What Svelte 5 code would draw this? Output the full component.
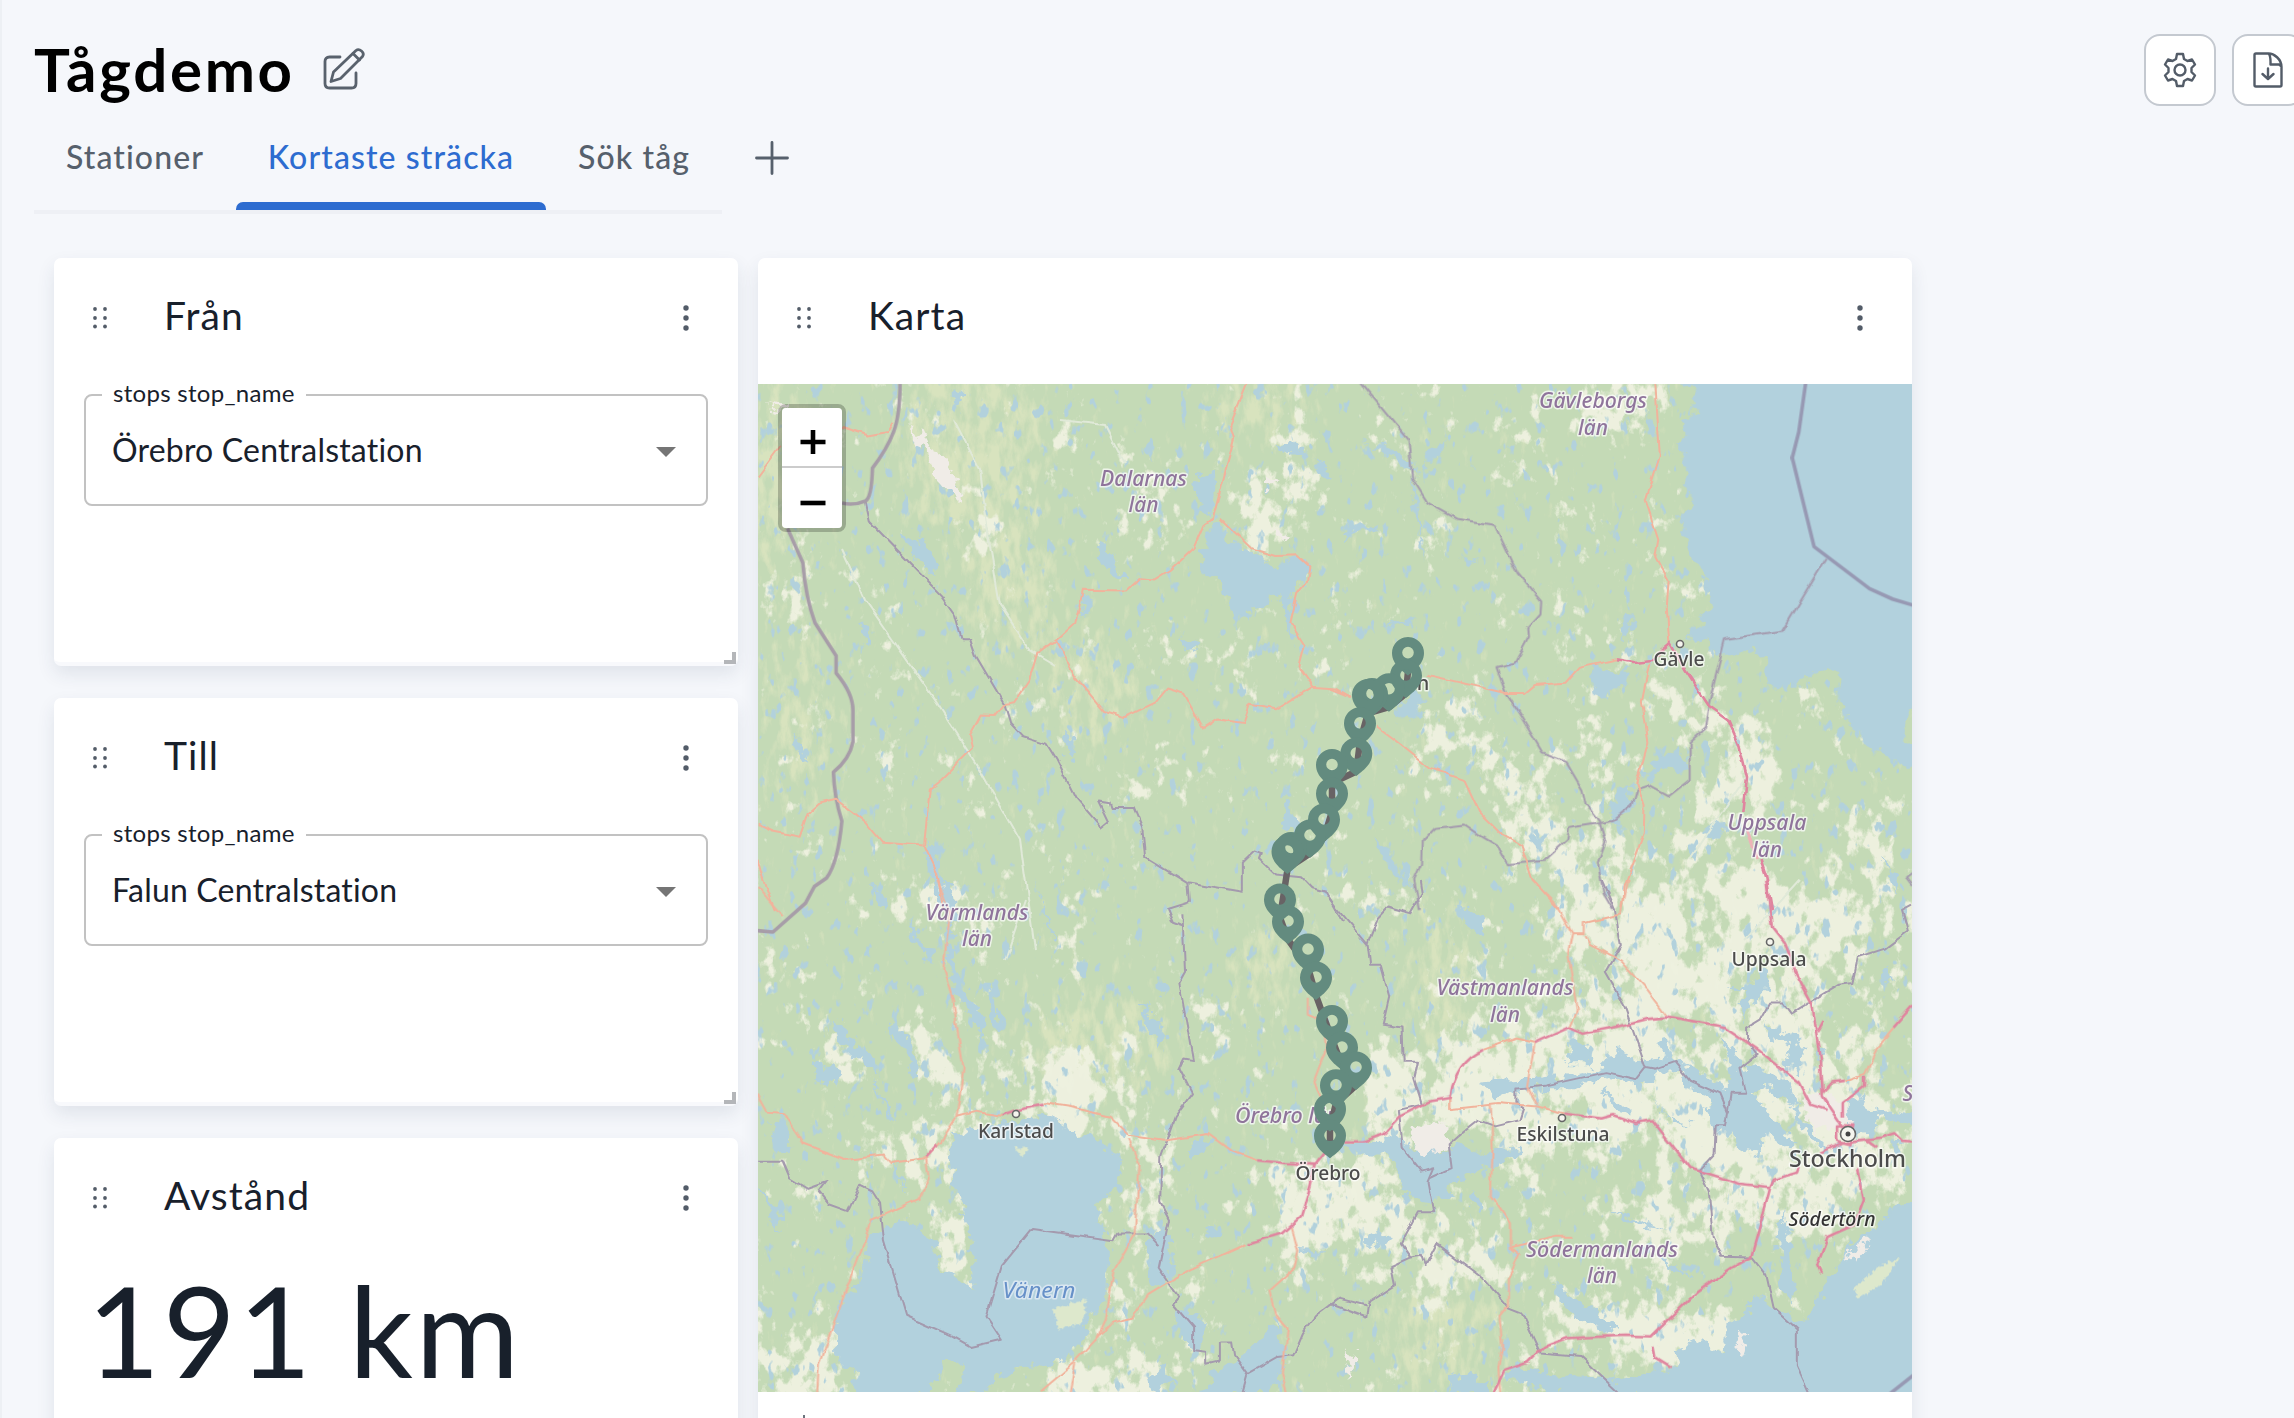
<script>
  const tabs = [
    { id: 'stationer', label: 'Stationer' },
    { id: 'kortaste', label: 'Kortaste sträcka', active: true },
    { id: 'sok', label: 'Sök tåg' }
  ];

  const selectors = [
    { id: 'fran', title: 'Från', value: 'Örebro Centralstation' },
    { id: 'till', title: 'Till', value: 'Falun Centralstation' }
  ];

  // Stations along the route, north to south.
  const stops = [
    [1408, 652.6], [1406, 675], [1389, 688.7], [1372, 693.5], [1368, 694.5], [1360, 722.8],
    [1356.3, 753], [1332, 764.5], [1332, 793], [1324, 819], [1310, 835], [1291, 847.5],
    [1287.5, 851], [1280, 899], [1288, 921], [1308, 949], [1316, 977], [1332, 1020.6],
    [1342, 1047], [1356, 1067], [1336, 1084.8], [1330, 1108.6], [1330, 1135.3]
  ];
  const route = stops.map(([x, y]) => `${x},${y + 18.5}`).join(' ');

  const regions = [
    { lines: ['Dalarnas', 'län'], x: 1143.5, y: 485.5, w: 87 },
    { lines: ['Gävleborgs', 'län'], x: 1593, y: 408, w: 108 },
    { lines: ['Uppsala', 'län'], x: 1767, y: 830, w: 79 },
    { lines: ['Värmlands', 'län'], x: 977, y: 919.5, w: 103 },
    { lines: ['Västmanlands', 'län'], x: 1505, y: 995, w: 137 },
    { lines: ['Södermanlands', 'län'], x: 1602, y: 1256.5, w: 152 },
    { lines: ['Örebro län'], x: 1287, y: 1123, w: 104 }
  ];
  const towns = [
    { name: 'Gävle', x: 1679, y: 666, w: 51, dot: [1680, 644] },
    { name: 'Karlstad', x: 1016, y: 1138, w: 76, dot: [1016, 1114] },
    { name: 'Örebro', x: 1328, y: 1180, w: 65 },
    { name: 'Uppsala', x: 1769, y: 966, w: 75, dot: [1770, 942] },
    { name: 'Eskilstuna', x: 1563, y: 1141, w: 93, dot: [1562, 1118] }
  ];

  const sheets = {
    nw: 'translate(750 370) scale(0.38265 0.34439)',
    ne: 'translate(1330 370) scale(0.38265 0.34439)',
    sw: 'translate(750 880) scale(0.38265 0.34311)',
    se: 'translate(1330 880) scale(0.38265 0.34311)',
    malaren: 'translate(1600 850) scale(0.33333)'
  };
</script>

{#snippet cardHeader(title)}
  <header class="card-head">
    <svg class="drag" width="16" height="24" viewBox="0 0 16 24" aria-hidden="true">
      {#each [3, 12, 20.5] as y}
        <circle cx="3" cy={y} r="1.9" /><circle cx="13" cy={y} r="1.9" />
      {/each}
    </svg>
    <h2>{title}</h2>
    <svg class="kebab" width="8" height="28" viewBox="0 0 8 28" aria-hidden="true">
      {#each [4, 14, 24] as y}<circle cx="4" cy={y} r="2.7" />{/each}
    </svg>
  </header>
{/snippet}

<main class="page">
  <div class="topbar">
    <h1>Tågdemo</h1>
    <svg class="edit" width="44" height="44" viewBox="0 0 44 44" aria-hidden="true">
      <path d="M18 10H7.500Q3 10 3 14.500V36.500Q3 41 7.500 41H29.500Q34 41 34 36.500V26" />
      <path d="M9 34.500 11.500 25 34 3.500Q36.500 1.500 39.500 4T40.500 9.500L18.500 31.500Z" />
      <path d="m31 6.500 6.500 6.500" />
    </svg>
    <div class="actions">
      <button aria-label="Inställningar">
        <svg width="34" height="36" viewBox="0 0 34 36">
          <path d="M14 2h6l1 5 3.500 2 4.500-1.500 3 5-3.500 3.500v4l3.500 3.500-3 5L24.500 27 21 29l-1 5h-6l-1-5-3.500-2L5 28.500l-3-5L5.500 20v-4L2 12.500l3-5L9.500 9 13 7Z" />
          <circle cx="17" cy="18" r="5.500" />
        </svg>
      </button>
      <button aria-label="Exportera">
        <svg width="30" height="36" viewBox="0 0 30 36">
          <path d="M3 1.500H15.500C21 1.500 28.500 7 28.500 15V33Q28.500 34.500 27 34.500H3Q1.500 34.500 1.500 33V3Q1.500 1.500 3 1.500ZM15.500 1.500C18 4 17.500 8 17.500 12.500H26L28 14M15 16.500V26.500M9.500 22 15 27 20.500 22" />
        </svg>
      </button>
    </div>
  </div>

  <div class="tab-row">
    <nav class="tabs">
      {#each tabs as tab (tab.id)}
        <a class="tab {tab.id}" class:active={tab.active} href="#{tab.id}">{tab.label}</a>
      {/each}
    </nav>
    <svg class="plus" width="34" height="34" viewBox="0 0 34 34" aria-hidden="true"><path d="M17 1.500V32.500M1.500 17H32.500" /></svg>
  </div>

  <div class="board">
    <div class="column">
      {#each selectors as s (s.id)}
        <section class="card small">
          {@render cardHeader(s.title)}
          <fieldset>
            <legend>stops stop_name</legend>
            <div class="value">
              <span>{s.value}</span>
              <svg width="20" height="10" viewBox="0 0 20 10" aria-hidden="true"><path d="M0 0H20L10 10Z" /></svg>
            </div>
          </fieldset>
          <i class="grip"></i>
        </section>
      {/each}
      <section class="card small">
        {@render cardHeader('Avstånd')}
        <p class="distance">191 km</p>
      </section>
    </div>

    <section class="card wide">
      {@render cardHeader('Karta')}
      <div class="map">
        <svg class="tiles" width="1154" height="1008" viewBox="758 384 1154 1008">
          <defs>
            <filter id="fields" filterUnits="userSpaceOnUse" x="758" y="384" width="1154" height="1008" color-interpolation-filters="sRGB">
              <feGaussianBlur in="SourceGraphic" stdDeviation="22" result="density" />
              <feTurbulence type="fractalNoise" baseFrequency="0.085 0.06" numOctaves="4" seed="8" />
              <feColorMatrix values="0 0 0 0 0  0 0 0 0 0  0 0 0 0 0  1 0 0 0 0" result="fine" />
              <feTurbulence type="fractalNoise" baseFrequency="0.022 0.016" numOctaves="3" seed="31" />
              <feColorMatrix values="0 0 0 0 0  0 0 0 0 0  0 0 0 0 0  1 0 0 0 0" result="coarse" />
              <feComposite in="fine" in2="coarse" operator="arithmetic" k2="0.55" k3="0.6" k4="-0.1" result="noise" />
              <feComposite in="density" in2="noise" operator="arithmetic" k2="0.3" k3="1" k4="-0.14" />
              <feComponentTransfer result="cut"><feFuncA type="linear" slope="10" intercept="-4.7" /></feComponentTransfer>
              <feFlood flood-color="#eff1e0" flood-opacity="0.95" />
              <feComposite in2="cut" operator="in" />
            </filter>
            <filter id="heath" filterUnits="userSpaceOnUse" x="758" y="384" width="1154" height="1008" color-interpolation-filters="sRGB">
              <feGaussianBlur in="SourceGraphic" stdDeviation="22" result="density" />
              <feTurbulence type="fractalNoise" baseFrequency="0.1 0.04" numOctaves="4" seed="21" />
              <feColorMatrix values="0 0 0 0 0  0 0 0 0 0  0 0 0 0 0  1 0 0 0 0" result="noise" />
              <feComposite in="density" in2="noise" operator="arithmetic" k2="0.3" k3="0.8" k4="-0.1" />
              <feComponentTransfer result="cut"><feFuncA type="linear" slope="4" intercept="-1.75" /></feComponentTransfer>
              <feFlood flood-color="#dde5c0" flood-opacity="0.8" />
              <feComposite in2="cut" operator="in" />
            </filter>
            <filter id="ponds" filterUnits="userSpaceOnUse" x="758" y="384" width="1154" height="1008" color-interpolation-filters="sRGB">
              <feTurbulence type="fractalNoise" baseFrequency="0.09 0.05" numOctaves="3" seed="5" />
              <feColorMatrix values="0 0 0 0 0.698  0 0 0 0 0.82  0 0 0 0 0.863  13 0 0 0 -8.6" />
            </filter>
            <filter id="shore" x="-5%" y="-5%" width="110%" height="110%" color-interpolation-filters="sRGB">
              <feTurbulence type="fractalNoise" baseFrequency="0.09" numOctaves="3" seed="3" />
              <feDisplacementMap in="SourceGraphic" scale="19" xChannelSelector="R" yChannelSelector="G" />
            </filter>
            <filter id="wiggle" filterUnits="userSpaceOnUse" x="740" y="370" width="1190" height="1040" color-interpolation-filters="sRGB">
              <feTurbulence type="fractalNoise" baseFrequency="0.06" numOctaves="2" seed="11" />
              <feDisplacementMap in="SourceGraphic" scale="6" xChannelSelector="R" yChannelSelector="G" />
            </filter>
          </defs>

          <rect class="forest" x="758" y="384" width="1154" height="1008" />
          <g filter="url(#heath)" fill="#000">
            <ellipse cx="970" cy="450" rx="80" ry="90" /><ellipse cx="770" cy="480" rx="40" ry="110" />
            <ellipse cx="1010" cy="590" rx="50" ry="70" /><ellipse cx="1090" cy="690" rx="45" ry="60" />
            <ellipse cx="800" cy="720" rx="30" ry="100" /><ellipse cx="1260" cy="400" rx="50" ry="45" />
            <ellipse cx="1270" cy="970" rx="35" ry="60" /><ellipse cx="1440" cy="980" rx="35" ry="80" />
            <ellipse cx="1440" cy="1340" rx="60" ry="60" /><ellipse cx="1100" cy="1040" rx="80" ry="50" />
          </g>
          <g filter="url(#fields)" fill="#000">
            <ellipse cx="1750" cy="950" rx="150" ry="80" opacity=".8" /><ellipse cx="1620" cy="960" rx="90" ry="100" opacity=".75" />
            <ellipse cx="1470" cy="1080" rx="100" ry="60" opacity=".95" /><ellipse cx="1620" cy="1100" rx="160" ry="60" />
            <ellipse cx="1340" cy="1210" rx="80" ry="50" /><ellipse cx="1470" cy="1250" rx="80" ry="40" opacity=".6" />
            <ellipse cx="1640" cy="1330" rx="130" ry="35" opacity=".8" /><ellipse cx="1800" cy="1130" rx="110" ry="100" opacity=".9" />
            <ellipse cx="1450" cy="770" rx="75" ry="30" opacity=".75" /><ellipse cx="1560" cy="800" rx="60" ry="80" opacity=".5" />
            <ellipse cx="1730" cy="800" rx="50" ry="80" opacity=".65" /><ellipse cx="1860" cy="830" rx="40" ry="60" opacity=".5" />
            <ellipse cx="1580" cy="405" rx="100" ry="25" opacity=".8" /><ellipse cx="1590" cy="560" rx="20" ry="40" opacity=".5" />
            <ellipse cx="1650" cy="670" rx="70" ry="20" opacity=".6" /><ellipse cx="1280" cy="490" rx="50" ry="50" opacity=".6" />
            <ellipse cx="1060" cy="1090" rx="100" ry="50" opacity=".75" /><ellipse cx="940" cy="1110" rx="40" ry="80" opacity=".6" />
            <ellipse cx="955" cy="1240" rx="25" ry="60" opacity=".95" /><ellipse cx="800" cy="1370" rx="50" ry="40" />
            <ellipse cx="1110" cy="1370" rx="60" ry="50" /><ellipse cx="1130" cy="1190" rx="20" ry="100" opacity=".7" />
            <ellipse cx="950" cy="920" rx="14" ry="60" opacity=".6" /><ellipse cx="850" cy="1070" rx="20" ry="50" opacity=".4" />
            <ellipse cx="1680" cy="1240" rx="80" ry="60" opacity=".4" />
          </g>
          <rect x="758" y="384" width="1154" height="1008" filter="url(#ponds)" />

          <g class="water" filter="url(#shore)">
            <g transform={sheets.nw}>
              <path d="M1170 315l20-20 30 8 5 50-15 70-30-15-15-60ZM1205 440l30 10 5 40 70 30 40 45 40 10 20-25 40-10 20 35-15 45-35 10-15 50 15 100-20-30-15-90-50 30-30-5 0 45-20-35-5 50-20-30-5-60-35-40-50-60 20-45ZM900 500l40 20 25 55 25 35-30-10-40-45ZM395 470l60 30 30 60 5 40-40-35-30-40ZM870 650l20 5 0 50-30 20ZM280 740h35l-5 60-15-15ZM1370 225l50-20 30 40-40 0ZM1475 260l30 10 10 50-30-20ZM110 1060l30 30 10 40-20-10ZM1390 1250l20-5 5 50 30 25-50 10ZM465 1370l15 30 45 180-15-10-40-110ZM535 60h20l-8 40h-12ZM820 1040l18 20 10 70-18-10ZM1120 780l60 10-30 30Z" />
            </g>
            <g transform={sheets.ne}>
              <path d="M915 30 960 60 945 90 965 120 920 145 930 200 905 210 930 250 920 330 950 380 915 430 930 490 945 540 970 570 985 640 1000 690 960 750 925 775 990 790 1000 820 1060 830 1100 815 1140 840 1145 905 1170 930 1200 920 1240 900 1290 870 1325 880 1325 960 1360 1040 1400 1090 1450 1120 1550 1170V1110L1500 1070 1510 980 1550 950V30Z" />
              <path d="M690 860l50 20 40-15 5 50-40 10-35 30-30-60ZM775 710l20 0-10 60-30 20ZM970 1340l50-30 20 20-40 35ZM850 1140l50-40 40 30-10 40-60-10-40 40-15-25ZM730 1310l20-100 40-10 0 60-40 60ZM85 210l90 20 60 70-40-10-40-40ZM240 260l60-60 10-40-15 80-50 40ZM35 480l40-30 60 10-80 15-20 20ZM130 740l90-15-20 20ZM215 290l15 100 5 100 25 70-30-60-15-110ZM170 960l60-20 20 30-40 50-30-10ZM110 1350l40 30 20 60 50 70-60-50-30-60ZM340 545l50 10-30 15ZM525 1350l50 0-20 25-30-5Z" />
            </g>
            <g transform={sheets.sw}>
              <path d="M520 730 560 750 590 720 700 700 790 690 860 750 900 740 930 790 970 810 960 900 920 930 905 1000 935 1040 935 1120 930 1240 880 1270 890 1320 830 1390 770 1415 700 1420 640 1460 610 1500H540L560 1400 500 1410 470 1500H270L280 1440 225 1410 225 1320 245 1220 285 1180 310 1060 350 1010 390 985 440 1020 480 1050 500 1130 560 1175 590 1190 575 1050 550 920 525 880Z" />
              <path d="M1040 1060 1080 1010 1095 1060 1110 1120 1080 1170 1040 1170ZM1190 1500 1210 1440 1300 1370 1380 1280 1395 1400 1360 1500ZM1110 1260l70 10 0 80-20 20-40-50ZM1150 780l30-30 30 5-10 20-30 20-20 40ZM215 400l45 40 20 50 45 10 5 60-40-20-50-60ZM165 545l50-15 15 40-30 35ZM360 420l60 30 20 110-15 20-20-80-40-40ZM420 110l20 60 50 70-30-10-40-60ZM505 0h15l15 70-5 170 30 80 45 80 10 110-15-70-50-90-30-60ZM620 310l25 10 10 100-15 20ZM740 0l70 200-25-50ZM20 890l50 60 10 80-20-20-10-60ZM50 700l60 20-15 70-30-10ZM320 570l20 60 45 70-20-5-30-60ZM370 820l40 90-40-60ZM1065 290l30 10 0 40-30-10ZM1190 1010l50 0-20 35-25-10ZM1440 1075l60 5-40 15ZM1040 1450l40-40 30 60-60 20ZM1020 350l60 80-5 60-40-70ZM310 10l40 40 5 40-30-30Z" />
            </g>
            <g transform={sheets.se}>
              <path d="M1550 930 1490 950 1440 990 1400 1030 1350 1080 1310 1140 1290 1190 1270 1240 1240 1290 1200 1260 1165 1250 1110 1200 1090 1250 1050 1290 1030 1330 1040 1390 960 1340 900 1370 910 1420 850 1430 780 1450 720 1470 700 1510H1550Z" />
              <path d="M30 770 160 750 200 770 300 790 330 770 400 800 500 780 500 800 430 830 330 870 310 900 330 910 270 940 200 930 185 880 160 800 60 800ZM400 590 490 580 620 570 700 550 780 520 850 560 850 585 780 590 700 580 640 610 500 610 430 630ZM620 460 680 480 690 540 620 540ZM750 500 790 520 790 560 740 560ZM370 910l25 20 0 40-30-30ZM1180 950l25 130 5 160-30-60-10-140ZM330 75l60 30 0 60-30-30ZM80 1050l60-30 20 30-60 20ZM300 1450l60-20 50 40 0 30H310ZM460 1420l120 20 160 10-10 50-160-10-100-30ZM590 1170l60 60 80 50 20 40-70-20-80-70ZM730 960l150 60-100-20ZM850 1090l100 70-60-20ZM1440 270l20-20 10 20-20 20Z" />
            </g>
            <g transform={sheets.malaren}>
              <path d="M480 375 505 360 500 420 470 450 445 470 430 520 425 460 445 425 375 415 470 405ZM360 545 375 560 405 610 430 650 470 640 520 680 570 700 590 760 530 740 490 710 470 740 520 810 590 870 560 900 500 850 480 860 490 920 440 910 400 850 340 830 300 780 340 760 330 740 250 710 240 660 130 665 0 690 0 650 60 590 70 640 130 630 200 625 170 575 200 570 220 630 280 660 340 690 370 710 390 680 380 610ZM490 520 540 540 590 560 610 620 590 680 560 640 570 590 520 560ZM10 720 60 750 110 800 60 790ZM150 730 200 800 280 820 210 820ZM740 760 790 730 780 770 830 780 940 800V830L840 800 800 850 770 880 740 820ZM650 580 670 600 660 640ZM880 870l20 0-10 30-15-10ZM860 20 890 90 890 140 865 70ZM840 370l30-15 5 30-25 5ZM580 760 640 850 690 900 640 880 590 820Z" />
            </g>
          </g>
          <g class="isles" filter="url(#shore)" transform={sheets.sw}>
            <path d="M790 1250l90-30-10 70-60 20ZM690 780l40 0-20 25Z" />
          </g>
          <g class="isles" filter="url(#shore)" transform={sheets.se}>
            <path d="M1370 1190l60-60 60-30-50 80-60 40Z" />
          </g>

          <g class="urban" filter="url(#shore)">
            <path d="M905 425l20 10 12 25 M918 440l14 8 6 15-10-5ZM930 450l18 12 12 25 3 18-14-14-16-18ZM1410 1130l32-10 8 26-30 12ZM1800 1100l35-5 20 25-40 12ZM1265 475l12 8-12 6ZM1275 530l12 6-6 8ZM1845 1255l22-16-8 24ZM1735 1330l12 5-4 22ZM1345 1350l10 5-5 25ZM768 402l20 5-8 6Z" />
          </g>

          <!-- county and national borders -->
          <g class="border" filter="url(#wiggle)">
            <g transform={sheets.nw}>
              <path d="M302 384 313 440 400 540 500 655 535 710 553 782H575L590 830 665 970 680 1025 712 1063 775 1085 800 1130 850 1240 918 1328 938 1310 912 1250 940 1255 945 1272H1003L1025 1330 1033 1415 1143 1490 1288 1518V1430L1318 1398 1335 1405 1330 1420 1370 1462 1440 1470 1470 1505 1505 1515 1550 1600" />
              <path d="M1143 1490 1147 1545 1090 1565 1105 1605 1130 1615" />
            </g>
            <g transform={sheets.ne}>
              <path d="M75 30 205 205 215 315 255 385 330 432 430 450 490 590 552 672 550 710 518 750 520 775 483 850 435 863 460 940 490 990 555 1110 615 1135 660 1220 668 1260 703 1310 720 1370 700 1430 715 1520 740 1568" />
              <path d="M1298 545 1183 757 1032 782 990 970 980 1040 940 1080V1190L885 1238 830 1205 803 1215 790 1265 740 1310 625 1330 620 1365 560 1425 465 1435 440 1385 395 1355 350 1320 275 1330 240 1370 238 1435 220 1480 235 1568" />
              <path d="M1521 1460 1505 1473 1521 1495" />
            </g>
            <g transform={sheets.sw}>
              <path d="M1130 100 1137 270 1122 300 1158 525 1135 520 1122 550 1155 622 1110 690 1075 800 1072 940 1095 990 1068 1130 1120 1215 1105 1235 1158 1305V1370L1192 1375V1410L1228 1400V1348H1260L1265 1385 1300 1440 1285 1500" />
              <path d="M1300 1440 1380 1390 1420 1385 1445 1320 1480 1270 1540 1220 1610 1240" />
              <path d="M20 818H85L105 870 150 900 200 880 180 910 205 945 255 965 288 888 320 905 340 940 350 1050 408 1270 530 1330 578 1361 658 1340 618 1272 658 1125 737 1017 950 1050 960 1030 1040 1030 1070 1067" />
            </g>
            <g transform={sheets.se}>
              <path d="M-5 50 98 187 105 250H133L155 340 138 422 187 430 190 530 230 530 220 580 240 655 180 670 190 780 240 850 270 840 255 880 270 968H230L185 1060 210 1100 160 1125 170 1180 100 1230 95 1275 0 1235" />
              <path d="M98 187 125 110 150 80 210 100 240 40 235 0M710 0 745 90 760 190 718 270 770 370 825 545 800 580 720 560 560 600 487 608V650L505 665 495 700 430 718 385 700 340 740 310 770 318 840 260 870" />
              <path d="M825 545 850 550 900 530 940 585 1020 625 1040 680 1035 715H1008L1005 800 965 850 990 910 1000 1040 1025 1098 1105 1100 1140 1150 1160 1250 1220 1310V1415L1255 1500M1042 680 1050 620 1085 620 1070 550 1115 510 1090 470V430L1120 410 1145 360 1185 360 1205 390 1330 305 1365 300 1380 225 1450 200 1510 150 1495 90 1521 75" />
              <path d="M210 1100 240 1095 250 1125 280 1060 400 1160 465 1245 500 1260 550 1380 655 1390 760 1500" />
            </g>
          </g>
          <g class="nation">
            <g transform={sheets.nw}><path d="M392 41Q392 130 375 180T320 285Q318 370 302 380 270 395 240 386M98 460 138 560Q145 660 170 735L225 830V880Q270 940 269 990V1080Q260 1130 218 1168 220 1240 240 1310 230 1430 200 1475L168 1500 145 1548 60 1632 20 1628" /></g>
            <g class="sea" transform={sheets.ne}><path d="M1244 30 1225 180 1208 255 1265 513 1410 635 1470 665 1530 685" /></g>
            <g class="sea" transform={sheets.se}><path d="M1460 1500 1530 1438" /></g>
          </g>

          <!-- trunk roads and motorways -->
          <g class="casing" filter="url(#wiggle)">
            <path d="M954 420 980 470 989 540 1000 605 1030 650 1055 665M842 550 865 600 900 650 935 700 980 770 1020 840 1035 950M1690 860 1750 770M1745 940 1800 880M1060 420 1105 425 1125 465M1005 960 1025 900" />
          </g>
          <g class="trunk" filter="url(#wiggle)">
            <g transform={sheets.nw}>
              <path d="M20 310 80 220M240 165 310 190 360 180 375 150M1300 35 1255 160 1265 200 1210 430 1185 450 1158 520 1100 580 1060 608 1020 605 985 640 870 638 850 735 800 785 750 825 730 900 690 965 665 970 640 1005 603 1003 575 1060 583 1098 500 1190 470 1215 455 1378 345 1370 300 1310 225 1245 185 1255 150 1290 130 1355 60 1340 20 1320M455 1378 490 1460 505 1568M20 1425 40 1500 65 1568M800 785 850 890 925 990 980 1008 1060 965 1090 925 1135 940 1185 1040 1220 1015 1290 1025 1305 972 1375 985 1470 920 1530 925 1568 950M1230 432 1310 518 1375 540 1430 538 1462 570 1455 615 1430 650 1412 735 1450 800 1435 865 1470 920" />
            </g>
            <g transform={sheets.ne}>
              <path d="M850 35 862 250 825 380 858 490 850 540 885 610 880 690 887 795M250 885 350 910 460 938H510L535 915 615 908 650 865 750 840M835 850 815 960 832 1080 803 1200 822 1260 820 1345 770 1500 765 1568M120 1035 175 1080 260 1155 350 1190 390 1285 450 1350 500 1380 530 1480 600 1568M0 925 55 950" />
            </g>
            <g transform={sheets.sw}>
              <path d="M490 0 522 100 505 260 530 350 558 550 540 690 500 760 460 805M20 625 45 675 90 680 140 768 250 813 350 800 370 825 460 810 467 870 440 930 350 975 315 990 300 1050 230 1260 180 1410 175 1500M540 690 590 675 660 688M770 650 830 660 940 690 990 745 1080 760 1200 740 1260 790 1325 817M990 755 1018 830 1005 1030 950 1140 930 1280 905 1340M1300 1060 1150 1135 1040 1210 1000 1275 945 1290 845 1410 760 1490M850 1410 835 1500M1413 1010 1430 1080 1420 1135 1360 1195 1375 1270 1405 1310 1390 1440 1405 1500M20 20 85 105M1455 340V390L1500 410 1505 500 1475 590 1500 650" />
            </g>
            <g transform={sheets.se}>
              <path d="M530 0 585 60 633 155 622 210 645 380 628 430M780 0 760 100 663 125V155H633M665 160 680 190 760 235 830 320 880 395M315 630V665L440 650 540 660 610 680M535 475 515 600 540 655M535 475 485 462 400 495M420 655 425 780 420 920 470 1000V1070L495 1090 465 1160 465 1240 443 1270 450 1360 440 1420 445 1500M470 1070 590 1040 635 1040M1345 585 1398 565 1440 470 1470 430" />
            </g>
          </g>
          <g class="motorway" filter="url(#wiggle)">
            <g transform={sheets.ne}><path d="M750 840 790 848 840 842 890 795 930 875 990 975 1040 1015 1070 1090 1090 1180 1080 1285M1125 1420 1140 1470 1155 1568" /></g>
            <g class="faint" transform={sheets.ne}><path d="M1090 1335 1115 1420" /></g>
            <g transform={sheets.sw}><path d="M458 808 490 770M660 688 720 665 770 655M1325 817 1400 825 1475 830 1500 795M1475 830 1465 890 1440 980 1390 1030 1305 1060" /></g>
            <g transform={sheets.se}>
              <path d="M1140 0 1155 140 1190 190 1215 265 1260 360 1280 520 1285 630 1340 720M1290 410 1275 440M40 762H90L140 740 180 690 260 645 315 635Q325 530 400 495M535 475 625 430 660 448 740 430 830 405 880 400 1030 430 1110 490 1225 590 1255 655 1295 670M610 680 710 695 740 685 800 708 840 700 940 840 1070 885 1150 895 1160 870 1220 850 1225 835M1280 795 1340 765 1440 750 1475 738 1495 760 1521 762M1150 895 1130 980 1100 1100 1050 1130 960 1200 840 1330 770 1328 620 1335 560 1360 520 1405 455 1430 425 1500M845 1360 850 1390 890 1418M1380 840 1395 930 1370 1005 1300 1040 1273 1120 1283 1145M1521 365 1470 430M1398 570V600L1340 650V690M1285 620 1310 590 1345 585M1325 715H1370L1360 770 1325 760ZM1400 755 1430 778" />
            </g>
          </g>

          <g class="region">
            {#each regions as r}
              <text x={r.x} y={r.y} textLength={r.w} lengthAdjust="spacingAndGlyphs">{r.lines[0]}</text>
              {#if r.lines[1]}<text x={r.x} y={r.y + 26.5} textLength="30" lengthAdjust="spacingAndGlyphs">{r.lines[1]}</text>{/if}
            {/each}
            <text x="1908" y="1101">S</text>
          </g>
          <text class="lake" x="1039" y="1297.5" textLength="73" lengthAdjust="spacingAndGlyphs">Vänern</text>
          <g class="town">
            {#each towns as t}
              {#if t.dot}<circle cx={t.dot[0]} cy={t.dot[1]} r="3.5" />{/if}
              <text x={t.x} y={t.y} textLength={t.w} lengthAdjust="spacingAndGlyphs">{t.name}</text>
            {/each}
            <text x="1423" y="690">n</text>
            <text class="capital" x="1847.5" y="1167" textLength="117" lengthAdjust="spacingAndGlyphs">Stockholm</text>
            <text class="district" x="1832" y="1225.5" textLength="87" lengthAdjust="spacingAndGlyphs">Södertörn</text>
            <circle cx="1848" cy="1134" r="7.5" /><circle class="core" cx="1848" cy="1134" r="2.5" />
          </g>

          <polyline class="route" points={route} />
          <g class="pins">
            {#each stops as [x, y]}
              <path transform="translate({x} {y})" d="M0 23C-3 20-16 13-16 .5A16 16 0 0 1 16 .5C16 13 3 20 0 23ZM5.800 0A5.800 5.800 0 1 0-5.800 0 5.800 5.800 0 1 0 5.800 0Z" />
            {/each}
          </g>
        </svg>
        <div class="zoom">
          <button aria-label="Zooma in"><svg width="28" height="28" viewBox="0 0 28 28"><path d="M14 2V26M1.500 14H26.500" /></svg></button>
          <button aria-label="Zooma ut"><svg width="28" height="28" viewBox="0 0 28 28"><path d="M1.500 14H26.500" /></svg></button>
        </div>
      </div>
      <div class="axis"></div>
    </section>
  </div>
</main>

<style>
  :global(body) { background: #f5f7fb; overflow: hidden; }
  .page {
    box-sizing: border-box; width: 2294px; height: 1418px; overflow: hidden;
    border-left: 2px solid #edf0f4; padding: 34px 0 0 32px;
    font-family: Lato, "Open Sans", sans-serif; color: #18202b;
    display: flex; flex-direction: column;
  }
  h1, h2, p { margin: 0; }
  .topbar { display: flex; height: 72px; flex: none; }
  h1 { width: 286px; margin-top: -1px; color: #000; font-size: 60px; font-weight: 700; line-height: 72px; letter-spacing: 2.7px; white-space: nowrap; }
  svg { display: block; fill: none; }
  .edit { margin: 13px 0 0 2px; stroke: #59626d; stroke-width: 2.8; stroke-linejoin: round; stroke-linecap: round; }
  .actions { display: flex; gap: 16px; margin-left: auto; margin-right: -10px; }
  .actions button {
    box-sizing: border-box; width: 72px; height: 72px; padding: 0; flex: none;
    display: grid; place-items: center; background: #fff; border: 2px solid #c4c9d0; border-radius: 16px;
    stroke: #535c68; stroke-width: 2.4; stroke-linejoin: round; stroke-linecap: round;
  }
  .tab-row { display: flex; height: 108px; flex: none; }
  .tabs { display: flex; height: 104px; border-bottom: 4px solid #eef0f5; }
  .tab {
    box-sizing: border-box; height: 104px; border-bottom: 0; text-align: center; text-decoration: none;
    color: #56606c; font-size: 32px; font-weight: 500; line-height: 102px; letter-spacing: 1.1px; white-space: nowrap;
  }
  .stationer { width: 202px; }
  .kortaste { width: 310px; }
  .sok { width: 176px; }
  .tab.active { color: #2d6cd0; }
  .tab.active::after { content: ""; display: block; height: 8px; margin-top: -6px; background: #2d6cd0; border-radius: 7px 7px 0 0; }
  .plus { margin: 35px 0 0 33px; stroke: #56606c; stroke-width: 2.8; stroke-linecap: round; }

  .board { display: flex; gap: 20px; padding: 44px 0 0 20px; align-items: flex-start; }
  .column { display: flex; flex-direction: column; gap: 32px; }
  .card { position: relative; box-sizing: border-box; background: #fff; border-radius: 7px; box-shadow: 0 8px 18px rgba(35, 60, 90, 0.1); }
  .small { width: 684px; height: 408px; border-bottom: 4px solid #f8f9fc; }
  .wide { width: 1154px; height: 1300px; }
  .card-head { display: flex; align-items: center; height: 126px; padding: 0 48px 6px 38px; box-sizing: border-box; }
  .drag, .kebab { fill: #535c68; flex: none; }
  h2 { flex: 1; margin: -6px 0 0 56px; font-size: 39px; font-weight: 400; line-height: 48px; letter-spacing: 1.1px; }
  fieldset {
    box-sizing: border-box; width: 624px; height: 123px; margin: -1px 0 0 30px; padding: 0 30px 0 26px;
    border: 2px solid #c2c2c2; border-radius: 8px; min-width: 0;
  }
  legend { margin-left: -10px; padding: 0 11px; font-size: 24px; line-height: 24px; letter-spacing: 0.3px; transform: translateY(-2px); }
  .value { display: flex; align-items: center; justify-content: space-between; height: 85px; font-size: 32px; letter-spacing: 0.2px; }
  .value svg { fill: #757575; margin-top: 4px; }
  .grip { position: absolute; right: 2px; bottom: -2px; width: 8px; height: 8px; border-right: 4px solid #b4b6b9; border-bottom: 4px solid #b4b6b9; }
  .distance { margin-top: -9px; padding-left: 33px; font-size: 126px; line-height: 150px; letter-spacing: 2.6px; }

  .map { position: relative; height: 1008px; overflow: hidden; }
  .distance + .map { margin: 0; }
  .forest { fill: #c4dab6; }
  .water path { fill: #b2d1dd; }
  .isles path { fill: #dde8cc; }
  .urban path { fill: #f0ece7; }
  .map path { vector-effect: non-scaling-stroke; }
  .border path { stroke: #a49aae; stroke-width: 2; stroke-linejoin: round; }
  .nation path { stroke: #a79da8; stroke-width: 3.6; stroke-linejoin: round; }
  .sea path { stroke: #9799b3; }
  .casing path { stroke: #e0e9d8; stroke-width: 2; }
  .trunk path { stroke: #f1b39c; stroke-width: 2; stroke-linejoin: round; }
  .motorway path { stroke: #e0859f; stroke-width: 2.6; stroke-linejoin: round; }
  .faint path { stroke: #eeb3b8; }
  .tiles text {
    font-family: "Noto Sans", sans-serif; text-anchor: middle; font-size: 21px;
    paint-order: stroke; stroke: rgba(255, 255, 255, 0.7); stroke-width: 3px; stroke-linejoin: round;
  }
  .region text { fill: #8f749b; font-style: italic; font-weight: 500; }
  .tiles .lake { fill: #6690c8; font-style: italic; stroke: rgba(225, 235, 245, 0.8); }
  .town text { fill: #4c4c4c; font-size: 20px; font-weight: 500; }
  .town .capital { font-size: 24px; }
  .town .district { font-style: italic; font-size: 19px; fill: #333; }
  .town circle { fill: #f5f5ee; stroke: #666; stroke-width: 1.6; }
  .town .core { fill: #444; stroke: none; }
  .route { stroke: #686365; stroke-width: 6.5; stroke-linejoin: round; }
  .pins path { fill: #638b7f; }
  .zoom {
    position: absolute; left: 20px; top: 20px; width: 60px; height: 120px;
    border: 4px solid rgba(0, 0, 0, 0.22); border-radius: 8px; background-clip: padding-box;
  }
  .zoom button {
    box-sizing: border-box; display: grid; place-items: center; width: 60px; height: 60px; padding: 9px 0 0 2px; margin: 0;
    background: #fff; border: 0; border-radius: 0 0 4px 4px; stroke: #000; stroke-width: 4.6;
  }
  .zoom button:first-child { border-bottom: 2px solid #ccc; border-radius: 4px 4px 0 0; }
  .axis { width: 2px; height: 12px; margin: 23px 0 0 45px; background: #6c737d; }
</style>
